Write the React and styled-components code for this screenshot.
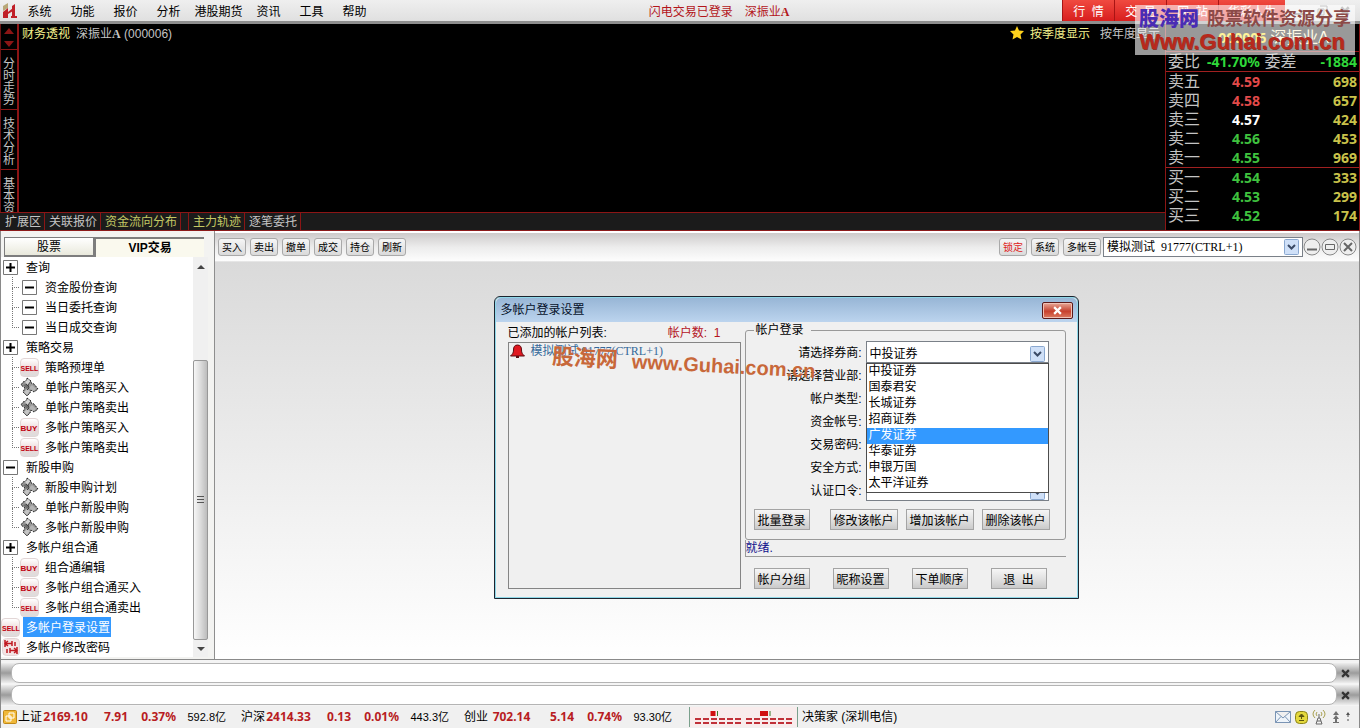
import React from 'react';
import styled, { createGlobalStyle, css } from 'styled-components';

const GlobalStyle = createGlobalStyle`
  * {
    box-sizing: border-box;
  }

  body {
    margin: 0;
    background: #f0f0f0;
    color: #000;
    font-family: "Liberation Sans", "Noto Sans CJK SC", sans-serif;
    font-size: 12px;
    line-height: 16px;
  }

  button, input, select {
    margin: 0;
    font: inherit;
    color: inherit;
  }

  ul {
    margin: 0;
    padding: 0;
    list-style: none;
  }
`;

const Page = styled.div`
  position: relative;
  display: flex;
  flex-direction: column;
  min-height: 100vh;
  overflow: hidden;
  white-space: nowrap;
`;

/* ---------- menu bar ---------- */

const MenuBar = styled.header`
  display: flex;
  height: 24px;
  border-bottom: 3px solid #8e8e8e;
  background: linear-gradient(#efefef, #e0e0e0);
`;

const Logo = styled.svg`
  width: 14px;
  height: 16px;
  margin: 3px 1px 0 3px;
`;

const Menu = styled.nav`
  display: flex;
`;

const MenuItem = styled.button`
  width: ${props => (props.$wide ? '57px' : '43px')};
  padding: 2px 0 0;
  border: none;
  background: transparent;
`;

const LoginState = styled.div`
  display: flex;
  flex: 1;
  gap: 12px;
  align-items: center;
  justify-content: center;
  padding-top: 2px;
  color: #b3161b;
`;

const Links = styled.div`
  display: flex;
`;

const LinkTab = styled.a`
  width: ${props => (props.$wide ? '67px' : '52px')};
  border-left: 1px solid #a81414;
  background: linear-gradient(#f04a40, #d81e1e);
  color: #fff;
  line-height: 24px;
  text-align: center;
  text-decoration: none;
  white-space: pre;
`;

const WindowIcons = styled.div`
  display: flex;
  align-items: center;
  justify-content: flex-end;
  gap: 12px;
  width: 75px;
  padding-right: 10px;
`;

/* ---------- market panel ---------- */

const Market = styled.section`
  display: flex;
  height: 207px;
  border-bottom: 1px solid #8c1a1a;
  background: #000;
  overflow: hidden;
`;

const ChartSide = styled.div`
  display: flex;
  flex: 1;
  flex-direction: column;
  min-width: 0;
`;

const ChartArea = styled.div`
  display: flex;
  height: 188px;
`;

const Rail = styled.div`
  display: flex;
  flex-direction: column;
  width: 19px;
  border-left: 1px solid #6a1515;
  border-right: 2px solid #8b1515;
  overflow: hidden;
`;

const RailArrows = styled.div`
  height: 26px;
  padding: 3px 0 0 3px;
  border-bottom: 1px solid #8b1515;
`;

const RailTab = styled.button`
  flex: none;
  height: 60px;
  padding: 8px 2px 3px 2px;
  border: none;
  border-bottom: 1px solid #8b1515;
  background: transparent;
  color: #c4c4c4;
  line-height: 12px;
  white-space: normal;
`;

const Chart = styled.div`
  display: flex;
  flex: 1;
  align-items: flex-start;
  gap: 6px;
  padding: 2px 5px 0 3px;
  color: #c4c4c4;
`;

const ChartTitle = styled.span`
  color: #f4f08c;
`;

const StockName = styled.span`
  flex: 1;
`;

const Serif = styled.span`
  font-family: "Liberation Serif", "Noto Sans CJK SC", serif;
  font-weight: 700;
`;

const Period = styled.button`
  padding: 0;
  margin-left: ${props => (props.$active ? '0' : '4px')};
  border: none;
  background: transparent;
  color: ${props => (props.$active ? '#f4f08c' : '#c4c4c4')};
`;

const ExtraTabs = styled.div`
  display: flex;
  height: 18px;
  padding-left: 1px;
  border-top: 1px solid #8b1515;
  background: #1b1b1b;
`;

const ExtraTab = styled.button`
  padding: 0 3px 0 4px;
  border: none;
  border-right: 1px solid #8b1515;
  background: transparent;
  color: ${props => (props.$active ? '#c3c864' : '#c4c4c4')};
`;

const Quotes = styled.aside`
  width: 195px;
  border-left: 1px solid #8b1515;
  border-right: 1px solid #8b1515;
  color: #c4c4c4;
`;

const QuoteTitle = styled.div`
  display: flex;
  align-items: center;
  justify-content: center;
  gap: 4px;
  height: 28px;
  padding-left: 22px;
  border-bottom: 1px solid #8b1515;
  color: #fff3c0;
  font-size: 16px;

  b {
    color: #ffe000;
    font-family: "Noto Sans", sans-serif;
    font-size: 14px;
  }
`;

const Ratio = styled.div`
  display: grid;
  grid-template-columns: 32px 60px 42px 1fr;
  height: 20px;
  padding: 0 2px;
  border-bottom: 1px solid #a02020;
  font-size: 16px;
  line-height: 19px;
`;

const Levels = styled.table`
  width: 100%;
  border-spacing: 0;
  table-layout: fixed;
  font-size: 16px;
  line-height: 19px;

  & + & {
    border-top: 1px solid #a02020;
  }

  th {
    width: 40px;
    height: 19px;
    padding: 0 0 0 2px;
    font-weight: 400;
    text-align: left;
  }

  td {
    width: 54px;
    padding: 0;
  }

  td:last-child {
    width: auto;
    padding-right: 2px;
  }
`;

const priceColors = { up: '#e24a4a', flat: '#fff', down: '#3fc23f', bright: '#2fd83a', volume: '#c9c24a' };

const Num = styled.span`
  display: block;
  color: ${props => priceColors[props.$tone]};
  font-family: "Noto Sans", sans-serif;
  font-size: 14px;
  font-weight: 700;
  text-align: right;
`;

/* ---------- trading window ---------- */

const Trading = styled.main`
  display: flex;
  flex: 1;
  border: solid #8a8a8a;
  border-width: 0 1px;
  box-shadow: inset 0 2px #fff;
`;

const Side = styled.aside`
  display: flex;
  flex-direction: column;
  width: 214px;
  padding: 6px 0 2px;
  border-right: 1px solid #8e8e8e;
  background: #f3f3f1;
`;

const SideTabs = styled.div`
  display: flex;
  height: 20px;
  padding: 0 10px 0 3px;
`;

const SideTab = styled.button`
  flex: ${props => (props.$active ? 110 : 90)};
  padding: 0;
  border: solid #7d7d7d;
  border-width: ${props => (props.$active ? '2px 0 0 1px' : '1px 2px 2px 1px')};
  background: ${props => (props.$active ? '#faf9ee' : 'linear-gradient(#fff, #e9e9dc)')};
  font-weight: ${props => (props.$active ? 700 : 400)};
`;

const TreeBox = styled.div`
  display: flex;
  flex: 1;
  margin-right: 6px;
  background: #fff;
`;

const Tree = styled.ul`
  flex: 1;
`;

const Row = styled.li`
  display: flex;
  align-items: center;
  gap: 3px;
  height: 20px;
`;

const Guide = styled.span`
  width: 7px;
  margin: 0 -3px 0 11px;

  &::before, &::after {
    content: '';
    display: block;
    height: 10px;
    border-left: 1px dotted #777;
  }

  &::before {
    border-bottom: 1px dotted #777;
  }

  &::after {
    border-left-color: ${props => (props.$last ? 'transparent' : '#777')};
  }
`;

const IconSlot = styled.span`
  display: flex;
  align-items: center;
  justify-content: center;
  width: ${props => (props.$nested ? '20px' : '19px')};
`;

const Badge = styled.span`
  width: 19px;
  height: 19px;
  border: 1px solid #e2d6d6;
  border-radius: 4px;
  background: linear-gradient(#fff, #ecd8d8 60%, #ddd);
  color: #c00010;
  font-size: ${props => (props.$big ? '8px' : '7px')};
  font-weight: 700;
  line-height: 19px;
  text-align: center;
`;

const RowLabel = styled.button`
  height: 20px;
  padding: 2px 1px 0 3px;
  border: none;
  background: ${props => (props.$selected ? '#3399ff' : 'transparent')};
  color: ${props => (props.$selected ? '#fff' : '#000')};
`;

const ScrollBar = styled.div`
  display: flex;
  flex-direction: column;
  align-items: center;
  width: 15px;
  background: #f0f0f0;
`;

const ScrollArrow = styled.span`
  width: 0;
  margin: ${props => (props.$up ? '8px 0' : '7px 0 6px')};
  border: solid transparent;
  border-width: ${props => (props.$up ? '0 4px 4px' : '4px 4px 0')};
  border-top-color: ${props => (props.$up ? 'transparent' : '#444')};
  border-bottom-color: ${props => (props.$up ? '#444' : 'transparent')};
`;

const Thumb = styled.div`
  display: flex;
  flex-direction: column;
  align-items: center;
  justify-content: center;
  gap: 1px;
  flex: 280;
  width: 15px;
  border: 1px solid #989898;
  border-radius: 2px;
  background: linear-gradient(90deg, #f6f6f6, #dcdcdc 50%, #bcbcbc);

  i {
    width: 7px;
    height: 2px;
    border-top: 1px solid #555;
  }
`;

const TrackSpace = styled.div`
  flex: 83;
`;

const Workspace = styled.div`
  display: flex;
  flex: 1;
  flex-direction: column;
  min-width: 0;
  padding-top: 2px;
`;

const Toolbar = styled.div`
  display: flex;
  align-items: center;
  gap: 4px;
  height: 29px;
  padding: 0 2px 0 3px;
  border-bottom: 1px solid #e6e6e6;
  background: linear-gradient(#cdcaca, #ececec 50%, #fdfdfd);
`;

const ToolButton = styled.button`
  width: ${props => (props.$wide ? '38px' : '28px')};
  height: 18px;
  padding: 1px 0 0;
  border: 1px solid #a9a9a9;
  border-radius: 3px;
  background: linear-gradient(#f6f6f6, #dadada);
  color: ${props => (props.$alert ? '#e02020' : '#000')};
  font-size: 10px;
  line-height: 15px;
`;

const Spacer = styled.div`
  flex: 1;
`;

const WindowButtons = styled.div`
  display: flex;
  margin-left: -4px;
`;

const RoundButton = styled.button`
  display: flex;
  width: 18px;
  height: 18px;
  padding: 0;
  border: none;
  background: transparent;
`;

const Combo = styled.div`
  position: relative;
  display: grid;
  grid-template-columns: 1fr 19px;
  align-items: center;
  width: ${props => (props.$toolbar ? '200px' : '183px')};
  height: ${props => (props.$toolbar ? '20px' : '22px')};
  margin-left: ${props => (props.$toolbar ? '-2px' : '0')};
  border: 1px solid #7a8088;
  background: #fff;

  select, input {
    grid-area: 1 / 1 / 2 / 3;
    width: 100%;
    height: 100%;
    padding: 0 3px;
    border: none;
    outline: none;
    background: transparent;
    appearance: none;
    font-family: "Liberation Serif", "Noto Sans CJK SC", serif;
  }
`;

const ArrowBox = styled.svg`
  grid-area: 1 / 2 / 2 / 3;
  width: 17px;
  height: 18px;
  pointer-events: none;
`;

const Canvas = styled.div`
  flex: 1;
  padding: 34px 22px 34px 20px;
  background: linear-gradient(#dadada, #fff);
`;

/* ---------- login dialog ---------- */

const Dialog = styled.section`
  position: relative;
  width: 585px;
  margin: 0 auto;
  border: 1px solid #1c2430;
  border-radius: 6px 6px 0 0;
  background: #f0f0f0;
  box-shadow: inset 0 0 0 1px #8fd8e8;
`;

const DialogTitle = styled.header`
  display: flex;
  align-items: center;
  justify-content: space-between;
  height: 24px;
  margin: 1px 1px 0;
  padding: 0 4px 0 5px;
  border-radius: 5px 5px 0 0;
  background: linear-gradient(#98b6d6, #bcd4ee);
  color: #06122a;

  h1 {
    margin: 0;
    font-size: 12px;
    font-weight: 400;
  }
`;

const CloseButton = styled.button`
  display: flex;
  align-items: center;
  justify-content: center;
  width: 31px;
  height: 17px;
  padding: 0;
  border: 1px solid #5c1a1a;
  border-radius: 2px;
  background: linear-gradient(#e8a898, #c84a38 50%, #c8402c 55%, #dc7a60);
  box-shadow: inset 0 0 0 1px #f0c0b4;
`;

const DialogBody = styled.div`
  display: flex;
  gap: 4px;
  padding: 0 12px 9px 13px;
`;

const Accounts = styled.div`
  display: flex;
  flex-direction: column;
  width: 233px;
`;

const AccountsHead = styled.div`
  display: flex;
  align-items: center;
  justify-content: space-between;
  height: 20px;
  padding: 2px 20px 0 0;
`;

const AccountCount = styled.span`
  color: #b4141e;
  white-space: pre;
`;

const AccountList = styled.ul`
  flex: 1;
  border: 1px solid #858585;

  li {
    display: flex;
    align-items: center;
    gap: 6px;
    padding-left: 1px;
    color: #35699a;
    font-family: "Liberation Serif", "Noto Sans CJK SC", serif;
  }
`;

const LoginSide = styled.div`
  flex: 1;
`;

const LoginForm = styled.fieldset`
  margin: 0;
  padding: 3px 8px 9px;
  border: 1px solid #999;
  border-radius: 3px;

  legend {
    padding: 0 7px 0 2px;
  }
`;

const Fields = styled.div`
  display: grid;
  grid-template-columns: 108px 183px;
  grid-auto-rows: 23px;
  column-gap: 4px;
  line-height: 24px;

  label {
    text-align: right;
  }
`;

const DropList = styled.ul`
  position: absolute;
  z-index: 2;
  top: 21px;
  left: -1px;
  right: -1px;
  border: 1px solid #4c4c4c;
  background: #fff;
`;

const DropItem = styled.li`
  height: 16px;
  padding-left: 2px;
  background: ${props => (props.$selected ? '#3399ff' : 'transparent')};
  color: ${props => (props.$selected ? '#fff' : '#000')};
  line-height: 14px;
`;

const buttonRow = css`
  display: flex;
  justify-content: space-between;
`;

const AccountButtons = styled.div`
  ${buttonRow}
  gap: 8px;
  width: 296px;
  margin-top: 7px;

  button:first-child {
    margin-right: auto;
  }
`;

const DialogButtons = styled.div`
  ${buttonRow}
  width: 293px;
  margin: 11px 0 0 9px;
`;

const PushButton = styled.button`
  width: ${props => (props.$wide ? '68px' : '56px')};
  height: 21px;
  padding: 2px 0 0;
  border: 1px solid #a4a4a4;
  background: linear-gradient(#f6f6f6, #e2e2e2 50%, #cacaca);
  white-space: pre;
`;

const Ready = styled.div`
  height: 17px;
  border: solid #9a9a9a;
  border-width: 0 0 1px 1px;
  color: #10108c;
`;

const DialogMark = styled.div`
  position: absolute;
  z-index: 3;
  top: 48px;
  left: 57px;
  display: flex;
  gap: 14px;
  color: #c8683a;
  font-size: 20px;
  font-weight: 700;
  line-height: 24px;
  transform: rotate(3deg);
  transform-origin: left center;
  pointer-events: none;

  span {
    font-size: 22px;
  }
`;

/* ---------- message bars and status ---------- */

const Dock = styled.div`
  display: flex;
  flex-direction: column;
  gap: 2px;
  height: 47px;
  padding: 3px 0 1px;
  border: solid #8a8a8a;
  border-width: 1px 1px 0;
  background: #f4f4f4;
`;

const DockRow = styled.div`
  display: flex;
  align-items: center;
  height: 20px;
  padding: 0 5px 0 10px;
  background: linear-gradient(#eee, #9c9c9c 50%, #eee);

  input {
    flex: 1;
    height: 20px;
    padding: 0 8px;
    border: 1px solid #b4b4b4;
    border-radius: 8px;
    outline: none;
    background: #fff;
  }

  button {
    display: flex;
    align-items: center;
    justify-content: center;
    width: 17px;
    height: 20px;
    padding: 0;
    border: none;
    background: transparent;
  }
`;

const StatusBar = styled.footer`
  display: flex;
  align-items: center;
  height: 22px;
  padding: 0 5px 0 2px;
  border: solid #8a8a8a;
  border-width: 0 1px;
  background: #f0f0f0;
`;

const Index = styled.div`
  display: grid;
  grid-template-columns: 25px 45px 40px 48px 50px;
  align-items: center;
  margin-right: 15px;

  b {
    color: #b81c22;
    font-family: "Noto Sans", sans-serif;
    text-align: right;
  }

  b:nth-child(2) {
    text-align: center;
  }
`;

const Turnover = styled.span`
  font-size: 11px;
  text-align: right;
`;

const Heat = styled.div`
  display: flex;
  align-items: center;
  gap: 4px;
  width: 109px;
  height: 20px;
  margin: 0 4px 0 2px;
  padding-left: 5px;
  border: solid #7aa08c;
  border-width: 0 1px;
  background: #f8ecec;
`;

const Tray = styled.div`
  display: flex;
  align-items: center;
  gap: 4px;
  margin-left: auto;
`;

const SiteMark = styled.div`
  position: absolute;
  z-index: 4;
  top: 5px;
  right: 5px;
  width: 220px;
  height: 50px;
  padding: 2px 4px;
  background: rgba(255, 255, 255, 0.6);
  pointer-events: none;
`;

const SiteName = styled.div`
  display: flex;
  justify-content: space-between;
  align-items: center;
  height: 24px;
  color: #8c4a48;
  font-size: 18px;
  font-weight: 700;

  b {
    color: #4a2cb4;
    font-size: 20px;
  }
`;

const SiteUrl = styled.div`
  color: #b8281c;
  font-size: 22px;
  font-weight: 700;
  line-height: 22px;
  text-shadow: 1px 1px #8c3a2a;
`;

const menus = ['系统', '功能', '报价', '分析', '港股期货', '资讯', '工具', '帮助'];
const links = ['行  情', '交  易', '网  站', '华彩人生'];
const railTabs = ['分时走势', '技术分析', '基本资料'];

const extraTabs = [
  { text: '扩展区' },
  { text: '关联报价' },
  { text: '资金流向分布', active: true },
  { text: '' },
  { text: '主力轨迹', active: true },
  { text: '逐笔委托' },
];

const sells = [
  ['卖五', '4.59', '698', 'up'],
  ['卖四', '4.58', '657', 'up'],
  ['卖三', '4.57', '424', 'flat'],
  ['卖二', '4.56', '453', 'down'],
  ['卖一', '4.55', '969', 'down'],
];

const buys = [
  ['买一', '4.54', '333', 'down'],
  ['买二', '4.53', '299', 'down'],
  ['买三', '4.52', '174', 'down'],
];

const tree = [
  { icon: 'plus', text: '查询' },
  { icon: 'minus', text: '资金股份查询', nested: true },
  { icon: 'minus', text: '当日委托查询', nested: true },
  { icon: 'minus', text: '当日成交查询', nested: true, last: true },
  { icon: 'plus', text: '策略交易' },
  { icon: 'sell', text: '策略预埋单', nested: true },
  { icon: 'blocks', text: '单帐户策略买入', nested: true },
  { icon: 'blocks', text: '单帐户策略卖出', nested: true },
  { icon: 'buy', text: '多帐户策略买入', nested: true },
  { icon: 'sell', text: '多帐户策略卖出', nested: true, last: true },
  { icon: 'minus', text: '新股申购' },
  { icon: 'blocks', text: '新股申购计划', nested: true },
  { icon: 'blocks', text: '单帐户新股申购', nested: true },
  { icon: 'blocks', text: '多帐户新股申购', nested: true, last: true },
  { icon: 'plus', text: '多帐户组合通' },
  { icon: 'buy', text: '组合通编辑', nested: true },
  { icon: 'buy', text: '多帐户组合通买入', nested: true },
  { icon: 'sell', text: '多帐户组合通卖出', nested: true, last: true },
  { icon: 'sell', text: '多帐户登录设置', selected: true },
  { icon: 'swap', text: '多帐户修改密码' },
];

const brokers = ['中投证券', '国泰君安', '长城证券', '招商证券', '广发证券', '华泰证券', '申银万国', '太平洋证券'];

const fields = [
  { id: 'branch', text: '请选择营业部', type: 'select' },
  { id: 'kind', text: '帐户类型', type: 'select' },
  { id: 'account', text: '资金帐号', type: 'text' },
  { id: 'password', text: '交易密码', type: 'password' },
  { id: 'security', text: '安全方式', type: 'select' },
  { id: 'token', text: '认证口令', type: 'select' },
];

const indexes = [
  ['上证', '2169.10', '7.91', '0.37%', '592.8亿'],
  ['沪深', '2414.33', '0.13', '0.01%', '443.3亿'],
  ['创业', '702.14', '5.14', '0.74%', '93.30亿'],
];

const Expander = ({ open }) => (
  <svg width="15" height="15" viewBox="0 0 15 15">
    <path d="M.5.5h14v14H.5z" fill="#fff" stroke="#777" />
    <path d={open ? 'M3 7.5h9' : 'M3 7.5h9M7.5 3v9'} stroke="#000" strokeWidth="2" />
  </svg>
);

const Blocks = () => (
  <svg width="19" height="20" viewBox="0 0 19 20">
    <path d="M7 1l4 3v2l3 1 4 5-4 3-3-2-1 3-3 3-4-4 2-4-4-3 2-3 3-1z" fill="#989898" stroke="#222" strokeDasharray="2 1" />
    <path d="M8 2l3 3-3 3-3-3z" fill="#d4d4d4" />
    <path d="M3 8l3-1 3 3-2 2z" fill="#6c6c6c" />
    <path d="M12 8l4 4-3 2-4-3z" fill="#b4b4b4" />
    <path d="M7 12l3 2-3 4-3-3z" fill="#c4c4c4" />
    <path d="M11 4L8 8l1 3-2 2M6 7l3 3" fill="none" stroke="#444" />
  </svg>
);

const Swap = () => (
  <svg width="18" height="18" viewBox="0 0 18 18">
    <rect x=".5" y=".5" width="17" height="17" rx="4" fill="#f3e4e4" stroke="#e2d6d6" />
    <path d="M3 2v7M3 5.500h7M6 3l-3 2.500L6 8M10 3v5M15 9v7M8 12.500h7M12 10l3 2.500-3 2.500M8 10v5M13 4v4M5 11v4" fill="none" stroke="#c01820" strokeWidth="1.500" />
  </svg>
);

const TreeIcon = ({ name }) => {
  if (name === 'sell') return <Badge>SELL</Badge>;
  if (name === 'buy') return <Badge $big>BUY</Badge>;
  if (name === 'blocks') return <Blocks />;
  if (name === 'swap') return <Swap />;
  return <Expander open={name === 'minus'} />;
};

const ComboArrow = () => (
  <ArrowBox viewBox="0 0 17 18">
    <rect x="1.5" y="1.5" width="14" height="15" rx="1" fill="#cfe0f8" stroke="#8aa8d0" />
    <path d="M5 7l3.5 3.5L12 7" fill="none" stroke="#3a4a66" strokeWidth="2" />
  </ArrowBox>
);

const Cross = ({ size, color }) => (
  <svg width={size} height={size} viewBox="0 0 8 8">
    <path d="M1 1l6 6M7 1L1 7" stroke={color} strokeWidth="2" />
  </svg>
);

const LevelTable = ({ rows }) => (
  <Levels>
    <tbody>
      {rows.map(([name, price, volume, tone]) => (
        <tr key={name}>
          <th scope="row">{name}</th>
          <td><Num $tone={tone}>{price}</Num></td>
          <td><Num $tone="volume">{volume}</Num></td>
        </tr>
      ))}
    </tbody>
  </Levels>
);

const HeatStrip = ({ block }) => (
  <svg width="47" height="16" viewBox="0 0 47 16">
    <path d="M0 10h47M0 14h47" stroke="#c03038" strokeWidth="2" strokeDasharray="6 2" />
    <path d={`M${18 - block / 2} 4.5h${block}`} stroke="#d01010" strokeWidth="5" />
    <path d={`M${20 + block / 2} 2v5`} stroke="#3a7a2a" />
  </svg>
);

function TopMenu() {
  return (
    <MenuBar>
      <Logo viewBox="0 0 14 16">
        <path d="M0 3l5-3v5L0 8z" fill="#b8a878" />
        <path d="M0 9l5-4v10H0zM5 9l5-4v3l-5 3zM9 3l3-2v12h2v2H8v-2h1z" fill="#c02028" />
      </Logo>
      <Menu>
        {menus.map(item => (
          <MenuItem key={item} $wide={item.length > 2}>{item}</MenuItem>
        ))}
      </Menu>
      <LoginState>
        <span>闪电交易已登录</span>
        <span>深振业<Serif>A</Serif></span>
      </LoginState>
      <Links>
        {links.map(link => (
          <LinkTab key={link} href="#" $wide={link === '华彩人生'}>{link}</LinkTab>
        ))}
      </Links>
      <WindowIcons>
        <svg width="11" height="11"><path d="M1 9h9" stroke="#777" strokeWidth="2" /></svg>
        <svg width="11" height="11"><path d="M3 1h7v6M1 4h6v6H1z" fill="none" stroke="#777" /></svg>
        <Cross size="10" color="#777" />
      </WindowIcons>
    </MenuBar>
  );
}

function MarketPanel() {
  return (
    <Market>
      <ChartSide>
        <ChartArea>
          <Rail>
            <RailArrows>
              <svg width="10" height="20" viewBox="0 0 10 20">
                <path d="M5 1l5 6H0zM0 14h10l-5 6z" fill="#8b1515" />
              </svg>
            </RailArrows>
            {railTabs.map(tab => <RailTab key={tab}>{tab}</RailTab>)}
          </Rail>
          <Chart>
            <ChartTitle>财务透视</ChartTitle>
            <StockName>深振业<Serif>A</Serif> (000006)</StockName>
            <svg width="14" height="14" viewBox="0 0 14 14">
              <path d="M7 0l2 4.500 5 .5-3.500 3.500 1 5L7 11l-4.500 2.500 1-5L0 5l5-.5z" fill="#ffd21c" />
            </svg>
            <Period $active>按季度显示</Period>
            <Period>按年度显示</Period>
          </Chart>
        </ChartArea>
        <ExtraTabs>
          {extraTabs.map(tab => (
            <ExtraTab key={tab.text} $active={tab.active}>{tab.text}</ExtraTab>
          ))}
        </ExtraTabs>
      </ChartSide>
      <Quotes>
        <QuoteTitle><b>000006</b> 深振业A</QuoteTitle>
        <Ratio>
          <span>委比</span>
          <Num $tone="bright">-41.70%</Num>
          <span>&nbsp;委差</span>
          <Num $tone="bright">-1884</Num>
        </Ratio>
        <LevelTable rows={sells} />
        <LevelTable rows={buys} />
      </Quotes>
    </Market>
  );
}

function SidePanel() {
  return (
    <Side>
      <SideTabs>
        <SideTab>股票</SideTab>
        <SideTab $active>VIP交易</SideTab>
      </SideTabs>
      <TreeBox>
        <Tree>
          {tree.map(row => (
            <Row key={row.text}>
              {row.nested && <Guide $last={row.last} />}
              <IconSlot $nested={row.nested}><TreeIcon name={row.icon} /></IconSlot>
              <RowLabel $selected={row.selected}>{row.text}</RowLabel>
            </Row>
          ))}
        </Tree>
        <ScrollBar>
          <ScrollArrow $up />
          <TrackSpace />
          <Thumb><i /><i /><i /></Thumb>
          <ScrollArrow />
        </ScrollBar>
      </TreeBox>
    </Side>
  );
}

function LoginDialog() {
  return (
    <Dialog role="dialog" aria-label="多帐户登录设置">
      <DialogTitle>
        <h1>多帐户登录设置</h1>
        <CloseButton aria-label="关闭"><Cross size="9" color="#fff" /></CloseButton>
      </DialogTitle>
      <DialogBody>
        <Accounts>
          <AccountsHead>
            <span>已添加的帐户列表:</span>
            <AccountCount>帐户数:  1</AccountCount>
          </AccountsHead>
          <AccountList>
            <li>
              <svg width="15" height="15" viewBox="0 0 15 15">
                <path d="M7.500 1c3 0 4 2 4 5s1 4 3 6H.5c2-2 3-3 3-6s1-5 4-5z" fill="#e01820" stroke="#5a0c10" />
                <path d="M6 12h3v2H6z" fill="#5a0c10" />
              </svg>
              模拟测试 91777(CTRL+1)
            </li>
          </AccountList>
        </Accounts>
        <LoginSide>
          <LoginForm>
            <legend>帐户登录</legend>
            <Fields>
              <label htmlFor="broker">请选择券商:</label>
              <Combo>
                <select id="broker" defaultValue="中投证券">
                  {brokers.map(name => <option key={name}>{name}</option>)}
                </select>
                <ComboArrow />
                <DropList role="listbox" aria-label="请选择券商">
                  {brokers.map(name => (
                    <DropItem
                      key={name}
                      role="option"
                      aria-selected={name === '广发证券'}
                      $selected={name === '广发证券'}
                    >
                      {name}
                    </DropItem>
                  ))}
                </DropList>
              </Combo>
              {fields.map(field => (
                <React.Fragment key={field.id}>
                  <label htmlFor={field.id}>{field.text}:</label>
                  <Combo>
                    {field.type === 'select'
                      ? <select id={field.id} />
                      : <input id={field.id} type={field.type} />}
                    {field.type === 'select' && <ComboArrow />}
                  </Combo>
                </React.Fragment>
              ))}
            </Fields>
            <AccountButtons>
              <PushButton>批量登录</PushButton>
              <PushButton $wide>修改该帐户</PushButton>
              <PushButton $wide>增加该帐户</PushButton>
              <PushButton $wide>删除该帐户</PushButton>
            </AccountButtons>
          </LoginForm>
          <Ready>就绪.</Ready>
          <DialogButtons>
            <PushButton>帐户分组</PushButton>
            <PushButton>昵称设置</PushButton>
            <PushButton>下单顺序</PushButton>
            <PushButton>退  出</PushButton>
          </DialogButtons>
        </LoginSide>
      </DialogBody>
      <DialogMark><span>股海网</span>www.Guhai.com.cn</DialogMark>
    </Dialog>
  );
}

function App() {
  return (
    <Page>
      <GlobalStyle />
      <TopMenu />
      <MarketPanel />
      <Trading>
        <SidePanel />
        <Workspace>
          <Toolbar>
            <ToolButton>买入</ToolButton>
            <ToolButton>卖出</ToolButton>
            <ToolButton>撤单</ToolButton>
            <ToolButton>成交</ToolButton>
            <ToolButton>持仓</ToolButton>
            <ToolButton>刷新</ToolButton>
            <Spacer />
            <ToolButton $alert>锁定</ToolButton>
            <ToolButton>系统</ToolButton>
            <ToolButton $wide>多帐号</ToolButton>
            <Combo $toolbar>
              <select aria-label="帐号">
                <option>模拟测试 &nbsp;91777(CTRL+1)</option>
              </select>
              <ComboArrow />
            </Combo>
            <WindowButtons>
              {['M4 11.5h10', 'M4.5 6.5h9v5h-9z', 'M5 5l8 8M13 5l-8 8'].map(d => (
                <RoundButton key={d}>
                  <svg width="18" height="18" viewBox="0 0 18 18">
                    <circle cx="9" cy="9" r="8" fill="#eee" stroke="#888" />
                    <path d={d} fill="none" stroke="#666" strokeWidth={d.endsWith('z') ? 1 : 2} />
                  </svg>
                </RoundButton>
              ))}
            </WindowButtons>
          </Toolbar>
          <Canvas>
            <LoginDialog />
          </Canvas>
        </Workspace>
      </Trading>
      <Dock>
        {['消息一', '消息二'].map(name => (
          <DockRow key={name}>
            <input aria-label={name} />
            <button aria-label="关闭"><Cross size="9" color="#333" /></button>
          </DockRow>
        ))}
      </Dock>
      <StatusBar>
        <svg width="15" height="14" viewBox="0 0 15 14">
          <rect x=".5" y=".5" width="13" height="13" rx="1" fill="#f0b838" stroke="#c08818" />
          <path d="M6 3h5v5H6zM3 6h5v5H3z" fill="#f0b838" stroke="#fff" />
        </svg>
        {indexes.map(([name, value, change, percent, turnover]) => (
          <Index key={name}>
            <span>{name}</span>
            <b>{value}</b>
            <b>{change}</b>
            <b>{percent}</b>
            <Turnover>{turnover}</Turnover>
          </Index>
        ))}
        <Heat>
          <HeatStrip block={5} />
          <HeatStrip block={8} />
        </Heat>
        <span>决策家 (深圳电信)</span>
        <Tray>
          <svg width="16" height="12" viewBox="0 0 16 12">
            <path d="M.5.5h15v11H.5zM.5.5L8 7l7.500-6.500M.5 11.500L6 5.500M15.500 11.500L10 5.500" fill="#eef4fa" stroke="#7a94b4" />
          </svg>
          <svg width="13" height="13" viewBox="0 0 13 13">
            <rect x=".5" y=".5" width="12" height="12" rx="4" fill="#e4d83c" stroke="#8c8418" />
            <path d="M6.500 3L9 5.500H4zM4 9.500h5M6.500 5v3" fill="#5a5410" stroke="#5a5410" />
          </svg>
          <svg width="14" height="16" viewBox="0 0 14 16">
            <path d="M5 3Q3 5 5 7M9 3q2 2 0 4M3 1Q-1 5 3 9M11 1q4 4 0 8" fill="none" stroke="#a8a050" />
            <path d="M7 5v4M6 9l-2 6h6l-2-6zM5 12h4" fill="none" stroke="#666" />
          </svg>
          <svg width="12" height="14" viewBox="0 0 12 14">
            <path d="M6 1l3 4H3zM6 5l3 4H3zM5 9h2v3H5zM3 12h6v1H3z" fill="#707070" />
          </svg>
          <svg width="8" height="14" viewBox="0 0 8 14">
            <path d="M2 2l2 3H0zM1.500 5h1v2h-1zM1.500 9h1v2h-1z" fill="#505050" />
          </svg>
        </Tray>
      </StatusBar>
      <SiteMark>
        <SiteName><b>股海网</b>股票软件资源分享</SiteName>
        <SiteUrl>Www.Guhai.com.cn</SiteUrl>
      </SiteMark>
    </Page>
  );
}

export default App;
